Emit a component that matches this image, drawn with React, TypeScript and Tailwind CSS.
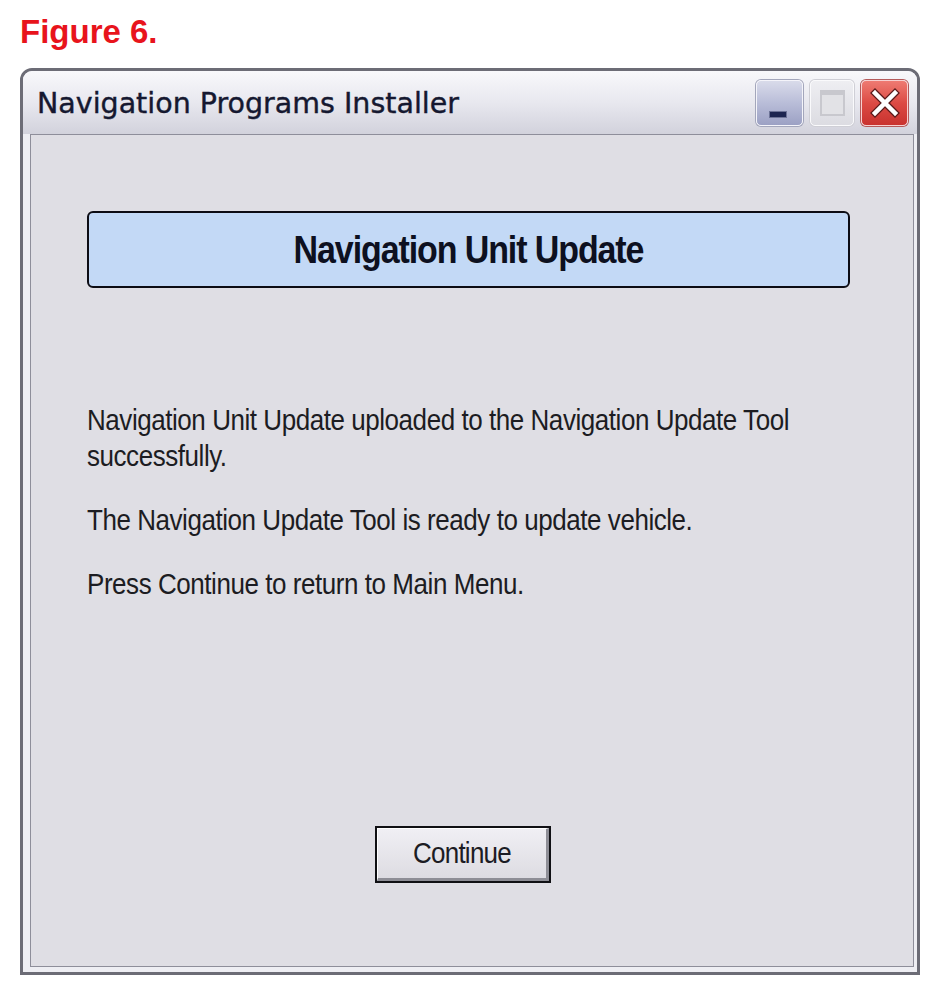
import React from 'react';

const sans = "font-['Liberation_Sans',Arial,sans-serif]";

function TitleButtons() {
  return (
    <div className="flex items-center gap-[7px] mr-[9px]">
      <div className="relative w-[47px] h-[46px] rounded-[5px] border border-[#f4f4fa] bg-linear-to-b from-[#d9dbea] via-[#b9bdd8] to-[#9ca1c4] shadow-[0_0_0_1px_#a3a6bb]">
        <div className="absolute left-[12px] top-[30px] w-[18px] h-[7px] bg-[#1d2550] border border-[#6d7396]" />
      </div>
      <div className="relative w-[44px] h-[46px] rounded-[5px] border border-[#fafafc] bg-linear-to-b from-[#eeeef2] to-[#dcdce2] shadow-[0_0_0_1px_#cfcfd6]">
        <div className="absolute left-[9px] top-[9px] w-[25px] h-[26px] border-[2px] border-t-[5px] border-[#c8c8ce] bg-[#e2e2e6]" />
      </div>
      <div className="relative w-[47px] h-[46px] rounded-[5px] border border-[#f7d0d0] bg-linear-to-b from-[#ee7a72] via-[#dc4a44] to-[#c9322f] shadow-[0_0_0_1px_#b45a5a]">
        <svg className="absolute left-[8px] top-[7px]" width="30" height="30" viewBox="0 0 30 30">
          <path d="M5 5 L25 25 M25 5 L5 25" stroke="#5a1a1a" strokeWidth="7" strokeLinecap="square" />
          <path d="M5 5 L25 25 M25 5 L5 25" stroke="#ffffff" strokeWidth="4.5" strokeLinecap="square" />
        </svg>
      </div>
    </div>
  );
}

export default function App() {
  return (
    <div className="w-[934px] h-[988px] bg-white overflow-hidden">
      <div className={`${sans} pl-[20px] pt-[12px] text-[33px] leading-[40px] font-bold text-[#e8141c]`}>
        Figure 6.
      </div>

      <div className="mt-[16px] ml-[20px] w-[900px] h-[907px] flex flex-col border-[3px] border-[#6c6c76] rounded-t-[12px] bg-[#eeeef3]">
        <div className="h-[63px] flex items-center justify-between rounded-t-[9px] bg-linear-to-b from-[#f8f8fb] via-[#e8e8ef] to-[#d2d2dc]">
          <span className="ml-[14px] mt-[4px] font-['DejaVu_Sans',sans-serif] text-[28.5px] text-[#151830] [-webkit-text-stroke:0.4px_#151830]">
            Navigation Programs Installer
          </span>
          <TitleButtons />
        </div>

        <div className="flex-1 ml-[7px] mr-[3px] border border-[#8e8e9a] bg-[#dfdee4] flex flex-col">
          <div className="mt-[76px] ml-[56px] w-[763px] h-[77px] flex items-center justify-center rounded-[6px] border-[2px] border-[#0c0c14] bg-[#c3d9f6]">
            <span className={`${sans} inline-block scale-y-[1.15] text-[34px] tracking-[-1.1px] font-bold text-[#0d1020]`}>
              Navigation Unit Update
            </span>
          </div>

          <div className={`${sans} ml-[56px] mt-[118px] text-[26px] tracking-[-0.45px] leading-[36px] text-[#1c1c22]`}>
            <p className="leading-[32px] scale-y-[1.12] origin-left">
              Navigation Unit Update uploaded to the Navigation Update Tool
              <br />
              successfully.
            </p>
            <p className="mt-[32px] scale-y-[1.12] origin-left">The Navigation Update Tool is ready to update vehicle.</p>
            <p className="mt-[28px] scale-y-[1.12] origin-left">Press Continue to return to Main Menu.</p>
          </div>

          <div className="mt-[224px] ml-[344px] w-[176px] h-[57px] border-[2px] border-[#101014] bg-[#8a8a92]">
            <div className="w-full h-full flex items-center justify-center border-t border-l border-white border-b-[3px] border-r-[3px] border-b-[#8e8e96] border-r-[#8e8e96] bg-linear-to-b from-[#f0eff4] to-[#dddce2]">
              <span className={`${sans} inline-block scale-y-[1.12] text-[26px] tracking-[-0.75px] text-[#1c1c24]`}>Continue</span>
            </div>
          </div>
        </div>
        <div className="h-[5px]" />
      </div>
    </div>
  );
}
